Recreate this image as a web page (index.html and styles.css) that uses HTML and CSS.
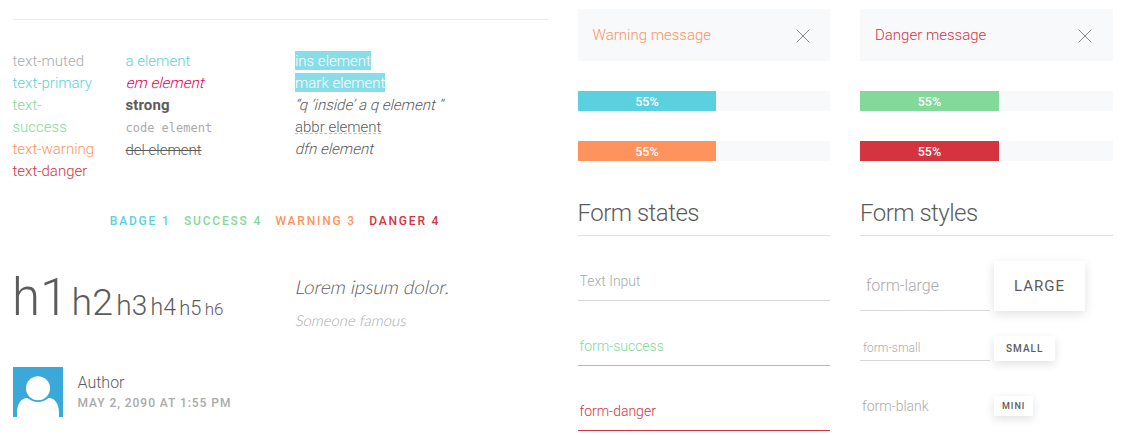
FILE: index.html
```html
<!DOCTYPE html>
<html lang="en">
<head>
    <meta charset="UTF-8">
    <meta name="viewport" content="width=device-width, initial-scale=1.0">
    <title>Theme preview</title>
    <link rel="stylesheet" href="styles.css">
</head>
<body>

    <div class="page">

        <div class="column-text">
            <hr class="divider">

            <div class="text-grid">
                <ul class="list">
                    <li class="text-muted">text-muted</li>
                    <li class="text-primary">text-primary</li>
                    <li class="text-success">text-success</li>
                    <li class="text-warning">text-warning</li>
                    <li class="text-danger">text-danger</li>
                </ul>
                <ul class="list">
                    <li><a href="#">a element</a></li>
                    <li><em>em element</em></li>
                    <li><strong>strong</strong></li>
                    <li class="code-item"><code>code element</code></li>
                    <li><del>del element</del></li>
                </ul>
                <ul class="list">
                    <li><ins>ins element</ins></li>
                    <li><mark>mark element</mark></li>
                    <li><q class="slanted">q <q>inside</q> a q element </q></li>
                    <li><abbr title="abbr">abbr element</abbr></li>
                    <li><dfn>dfn element</dfn></li>
                </ul>
            </div>

            <div class="badges">
                <span class="badge text-primary">Badge 1</span>
                <span class="badge text-success">Success 4</span>
                <span class="badge text-warning">Warning 3</span>
                <span class="badge text-danger">Danger 4</span>
            </div>

            <div class="type-grid">
                <div class="headings">
                    <span class="h1">h1</span>
                    <span class="h2">h2</span>
                    <span class="h3">h3</span>
                    <span class="h4">h4</span>
                    <span class="h5">h5</span>
                    <span class="h6">h6</span>
                </div>
                <blockquote class="quote">
                    <p>Lorem ipsum dolor.</p>
                    <small>Someone famous</small>
                </blockquote>
            </div>

            <div class="comment">
                <svg class="avatar" width="50" height="50" viewBox="0 0 50 50">
                    <rect width="50" height="50" fill="#3aa8d8"/>
                    <path d="M4 50V46C4 37 8 31 14.500 31C18 33.800 21 35 25 35S32 33.800 35.500 31C42 31 46 37 46 46V50Z" fill="#fff"/>
                    <circle cx="25" cy="21.200" r="12" fill="#fff"/>
                </svg>
                <div>
                    <h4 class="comment-title">Author</h4>
                    <div class="comment-meta">May 2, 2090 at 1:55 pm</div>
                </div>
            </div>
        </div>

        <div class="column">
            <div class="alert text-warning">
                <span>Warning message</span>
                <svg class="close" width="14" height="14" viewBox="0 0 14 14"><path d="M.5 .5L13.500 13.500M13.500 .5L.5 13.500"/></svg>
            </div>
            <div class="progress"><div class="bar" style="width: 55%">55%</div></div>
            <div class="progress"><div class="bar bar-warning" style="width: 55%">55%</div></div>

            <h3 class="title">Form states</h3>
            <form class="form">
                <input class="input" type="text" placeholder="Text Input">
                <input class="input input-success" type="text" placeholder="form-success">
                <input class="input input-danger" type="text" placeholder="form-danger">
            </form>
        </div>

        <div class="column">
            <div class="alert text-danger">
                <span>Danger message</span>
                <svg class="close" width="14" height="14" viewBox="0 0 14 14"><path d="M.5 .5L13.500 13.500M13.500 .5L.5 13.500"/></svg>
            </div>
            <div class="progress"><div class="bar bar-success" style="width: 55%">55%</div></div>
            <div class="progress"><div class="bar bar-danger" style="width: 55%">55%</div></div>

            <h3 class="title">Form styles</h3>
            <form class="form">
                <div class="form-row">
                    <input class="input input-large" type="text" placeholder="form-large">
                    <button class="button button-large" type="button">Large</button>
                </div>
                <div class="form-row">
                    <input class="input input-small" type="text" placeholder="form-small">
                    <button class="button button-small" type="button">Small</button>
                </div>
                <div class="form-row">
                    <input class="input input-blank" type="text" placeholder="form-blank">
                    <button class="button button-mini" type="button">Mini</button>
                </div>
            </form>
        </div>

    </div>

</body>
</html>
```
FILE: styles.css
```css
* {
    box-sizing: border-box;
}

body {
    margin: 0;
    font-family: Roboto, sans-serif;
    font-size: 15px;
    font-weight: 300;
    line-height: 22px;
    color: #5b5b5b;
    background: #fff;
    overflow: hidden;
}

.page {
    display: grid;
    grid-template-columns: 535px 252.5px 252.5px;
    column-gap: 30px;
    padding: 9px 10px 0 12.5px;
}

/* Colors */
.text-muted { color: #aaa; }
.text-primary { color: #5bd1df; }
.text-success { color: #82d99a; }
.text-warning { color: #ff935d; }
.text-danger { color: #d4343f; }

/* Text */
.divider {
    margin: 10px 0 30px;
    border: 0;
    border-top: 1px solid #ebebeb;
}

.text-grid {
    display: grid;
    grid-template-columns: 83px 139.5px 1fr;
    column-gap: 30px;
}

.list {
    margin: 0;
    padding: 0;
    list-style: none;
}

.code-item {
    height: 23px;
}

a {
    color: #5bd1df;
    text-decoration: none;
}

/* Slanted upright letters */
em,
dfn,
.slanted {
    display: inline-block;
    margin-left: 1px;
    font-style: normal;
    transform: skewX(-14deg);
}

em {
    color: #d05;
}

strong {
    font-weight: 700;
    letter-spacing: 0.1px;
}

code {
    font-family: "DejaVu Sans Mono", monospace;
    font-size: 12px;
    line-height: 1;
    color: #aaa;
}

ins,
mark {
    padding-top: 1px;
    background: #87dde8;
    color: #fff;
    text-decoration: none;
}

q {
    quotes: "“" "”" "‘" "’";
}

abbr {
    display: inline-block;
    border-bottom: 1px dashed #bbb;
    line-height: 12px;
    text-decoration: none;
}

.badges {
    display: flex;
    justify-content: center;
    gap: 13.4px;
    margin-top: 28px;
    padding-right: 10px;
}

.badge {
    font-size: 12px;
    font-weight: 500;
    letter-spacing: 1.8px;
    text-transform: uppercase;
}

/* Headings */
.type-grid {
    display: grid;
    grid-template-columns: 253px 1fr;
    column-gap: 30px;
    margin-top: 40px;
}

.headings {
    display: flex;
    align-items: baseline;
    gap: 3.3px;
    height: 66px;
    margin-left: -0.5px;
    line-height: 52px;
}

.h1 { font-size: 51px; }
.h2 { font-size: 37.5px; }
.h3 { font-size: 28px; }
.h4 { font-size: 23px; }
.h5 { font-size: 20px; }
.h6 { font-size: 17px; }

.quote {
    margin: 0;
    padding-top: 3px;
    font-family: Lato, sans-serif;
}

.quote p {
    margin: 0 0 10px;
    font-size: 19px;
    letter-spacing: -0.1px;
    line-height: 24px;
    transform: skewX(-12deg);
}

.quote small {
    display: block;
    font-size: 15px;
    letter-spacing: -0.1px;
    color: #aaa;
    transform: skewX(-12deg);
}

/* Comment */
.comment {
    display: flex;
    gap: 15px;
    margin-top: 29px;
}

.comment-title {
    margin: 6px 0 0;
    font-size: 16px;
    font-weight: 300;
    line-height: 20px;
}

.comment-meta {
    font-size: 12px;
    font-weight: 500;
    letter-spacing: 0.95px;
    line-height: 20px;
    text-transform: uppercase;
    color: #aaa;
}

/* Alert */
.alert {
    display: flex;
    justify-content: space-between;
    padding: 15px 20.5px 15px 15px;
    margin-bottom: 30px;
    background: #f8f9fb;
}

.close {
    margin-top: 5px;
    fill: none;
    stroke: #888;
    stroke-width: 1;
}

/* Progress */
.progress {
    height: 20px;
    margin-bottom: 30px;
    background: #f8f9fb;
}

.bar {
    height: 20px;
    background: #5bd1df;
    color: #fff;
    font-size: 12.5px;
    font-weight: 500;
    line-height: 21px;
    text-align: center;
}

.bar-success { background: #82d99a; }
.bar-warning { background: #ff935d; }
.bar-danger { background: #d4343f; }

/* Forms */
.title {
    height: 45px;
    margin: 0 0 25px;
    border-bottom: 1px solid #dfdfdf;
    font-size: 24px;
    font-weight: 300;
    letter-spacing: -0.5px;
    line-height: 44px;
}

.form {
    display: flex;
    flex-direction: column;
    gap: 25px;
}

.form-row {
    display: flex;
    align-items: center;
    gap: 4px;
}

.input {
    width: 100%;
    height: 40px;
    padding: 0 2px;
    border: 0;
    border-bottom: 1px solid #d8d8d8;
    border-radius: 0;
    background: transparent;
    color: #5b5b5b;
    font: inherit;
    font-size: 14px;
    outline: none;
}

.input::placeholder {
    color: #aaa;
}

.input-success { border-color: #82d99a; }
.input-success::placeholder { color: #82d99a; }
.input-danger { border-color: #d4343f; }
.input-danger::placeholder { color: #d4343f; }

.form-row .input {
    width: 130px;
}

.form-row .input-large {
    height: 50px;
    padding: 0 6px;
    font-size: 16px;
}

.form-row .input-small {
    height: 25px;
    padding: 0 3px;
    font-size: 12px;
}

.form-row .input-blank {
    border-color: transparent;
}

.button {
    border: 0;
    background: #fff;
    box-shadow: 0 3px 10px rgba(0, 0, 0, 0.12);
    color: #5b5b5b;
    font-family: inherit;
    font-weight: 500;
    letter-spacing: 1px;
    text-transform: uppercase;
}

.button-large {
    height: 50px;
    padding: 0 20px;
    font-size: 15px;
    font-weight: 400;
}

.button-small {
    height: 25px;
    padding: 0 12px;
    font-size: 10px;
}

.button-mini {
    height: 20px;
    padding: 0 8px;
    font-size: 9px;
}
```
